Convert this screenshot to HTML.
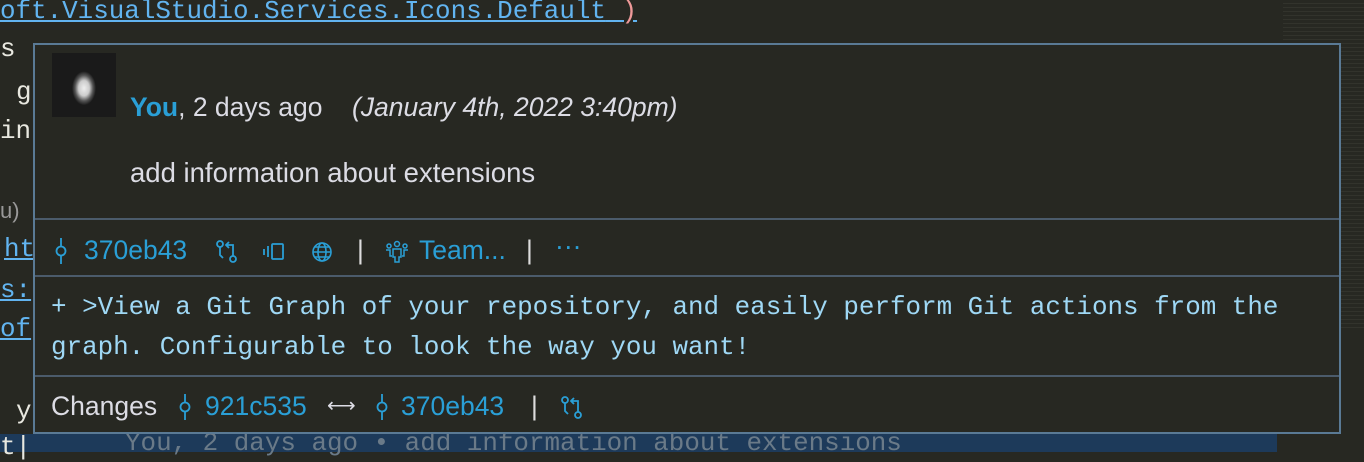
<!DOCTYPE html>
<html><head><style>
body{margin:0;width:1364px;height:452px;background:#272822;overflow:hidden;position:relative;font-family:"Liberation Sans",sans-serif}
.mono{font-family:"Liberation Mono","DejaVu Sans Mono",monospace}
.ed{position:absolute;color:#e8e8e0;font-size:25.9px;white-space:pre}
.pop{position:absolute;left:33px;top:43px;width:1304px;height:387px;border:2px solid #5a7a95;background:#272822}
.sep{position:absolute;left:0;right:0;height:2px;background:#4b5b6b}
.b{color:#2a9fd6}
.t{position:absolute;font-size:26.5px;white-space:pre;line-height:30px}
svg{position:absolute}
</style></head><body>
<div class="ed mono" style="left:0;top:-4px;color:#62b4f0;text-decoration:underline">oft.VisualStudio.Services.Icons.Default<span style="text-decoration:none;color:#e99"> )</span></div>
<div class="ed mono" style="left:0;top:34px">s</div>
<div class="ed mono" style="left:16px;top:77px">g</div>
<div class="ed mono" style="left:0;top:116px">in</div>
<div class="ed" style="left:0;top:198px;color:#999;font-size:22px">u)</div>
<div class="ed mono" style="left:4px;top:234px;color:#62b4f0;text-decoration:underline">ht</div>
<div class="ed mono" style="left:0;top:275px;color:#62b4f0;text-decoration:underline">s:</div>
<div class="ed mono" style="left:0;top:314px;color:#62b4f0;text-decoration:underline">of</div>
<div class="ed mono" style="left:16px;top:396px">y</div>
<div style="position:absolute;left:0;top:434px;width:1277px;height:18px;background:#1d3a5a"></div>
<div class="ed mono" style="left:0;top:432px">t|</div>
<div class="ed mono" style="left:125px;top:428px;color:#6a7a88">You, 2 days ago • add information about extensions</div>
<div style="position:absolute;left:1283px;top:0;width:81px;height:330px;background:repeating-linear-gradient(#272822 0 3px,#3a3a33 3px 4px);opacity:.6"></div>
<div class="pop">
 <div style="position:absolute;left:17px;top:8px;width:64px;height:64px;background:radial-gradient(ellipse 12px 17px at 50% 55%,#eee 0,#ccc 45%,#555 75%,#1a1a1a 100%),#111"></div>
 <div class="t" style="left:95px;top:47px;color:#dcdce4"><b class="b">You</b>, 2 days ago    <i>(January 4th, 2022 3:40pm)</i></div>
 <div class="t" style="left:95px;top:113px;color:#dcdce4;font-size:27.5px">add information about extensions</div>
 <div class="sep" style="top:173px"></div>
 <svg style="left:20px;top:193px" width="12" height="26" viewBox="0 0 12 26" fill="none" stroke="#2a9fd6" stroke-width="1.8"><path d="M6 0v8M6 18v8"/><circle cx="6" cy="13" r="4.5"/></svg>
 <div class="t" style="left:49px;top:190px;color:#2a9fd6">370eb43</div>
 <svg style="left:180px;top:194px" width="24" height="26" viewBox="0 0 24 26" fill="none" stroke="#2a9fd6" stroke-width="1.8"><circle cx="5" cy="5" r="3"/><circle cx="18" cy="20" r="3"/><path d="M5 8v8l3 3M14 3l-3 3 3 3M11 6h7v11"/></svg>
 <svg style="left:227px;top:196px" width="26" height="22" viewBox="0 0 26 22" fill="none" stroke="#2a9fd6" stroke-width="1.8"><rect x="10" y="3" width="11" height="15" rx="1"/><path d="M6 5v11M2 8v6"/></svg>
 <svg style="left:275px;top:195px" width="24" height="24" viewBox="0 0 24 24" fill="none" stroke="#2a9fd6" stroke-width="1.6"><circle cx="12" cy="12" r="9"/><ellipse cx="12" cy="12" rx="4" ry="9"/><path d="M3 12h18M5 7h14M5 17h14"/></svg>
 <div class="t" style="left:322px;top:190px;color:#ddd">|</div>
 <svg style="left:350px;top:195px" width="24" height="24" viewBox="0 0 24 24" fill="none" stroke="#2a9fd6" stroke-width="1.5"><circle cx="12" cy="4" r="2.5"/><circle cx="4" cy="6" r="2"/><circle cx="20" cy="6" r="2"/><path d="M8 9h8v8h-2v5h-4v-5H8zM1 10h4v6h2M23 10h-4v6h-2"/></svg>
 <div class="t" style="left:384px;top:190px;color:#2a9fd6">Team...</div>
 <div class="t" style="left:491px;top:190px;color:#ddd">|</div>
 <div class="t" style="left:520px;top:186px;color:#2a9fd6">···</div>
 <div class="sep" style="top:230px"></div>
 <div class="mono" style="position:absolute;left:16px;top:242px;font-size:25.9px;line-height:40px;color:#9fd8f5;width:1270px">+ &gt;View a Git Graph of your repository, and easily perform Git actions from the graph. Configurable to look the way you want!</div>
 <div class="sep" style="top:330px"></div>
 <div class="t" style="left:16px;top:346px;color:#dcdce4">Changes</div>
 <svg style="left:144px;top:349px" width="12" height="26" viewBox="0 0 12 26" fill="none" stroke="#2a9fd6" stroke-width="1.8"><path d="M6 0v8M6 18v8"/><circle cx="6" cy="13" r="4.5"/></svg>
 <div class="t" style="left:170px;top:346px;color:#2a9fd6">921c535</div>
 <div class="t" style="left:292px;top:346px;color:#dcdce4;font-size:20px">⟷</div>
 <svg style="left:341px;top:349px" width="12" height="26" viewBox="0 0 12 26" fill="none" stroke="#2a9fd6" stroke-width="1.8"><path d="M6 0v8M6 18v8"/><circle cx="6" cy="13" r="4.5"/></svg>
 <div class="t" style="left:366px;top:346px;color:#2a9fd6">370eb43</div>
 <div class="t" style="left:496px;top:346px;color:#ddd">|</div>
 <svg style="left:525px;top:350px" width="24" height="26" viewBox="0 0 24 26" fill="none" stroke="#2a9fd6" stroke-width="1.8"><circle cx="5" cy="5" r="3"/><circle cx="18" cy="20" r="3"/><path d="M5 8v8l3 3M14 3l-3 3 3 3M11 6h7v11"/></svg>
</div>
</body></html>
